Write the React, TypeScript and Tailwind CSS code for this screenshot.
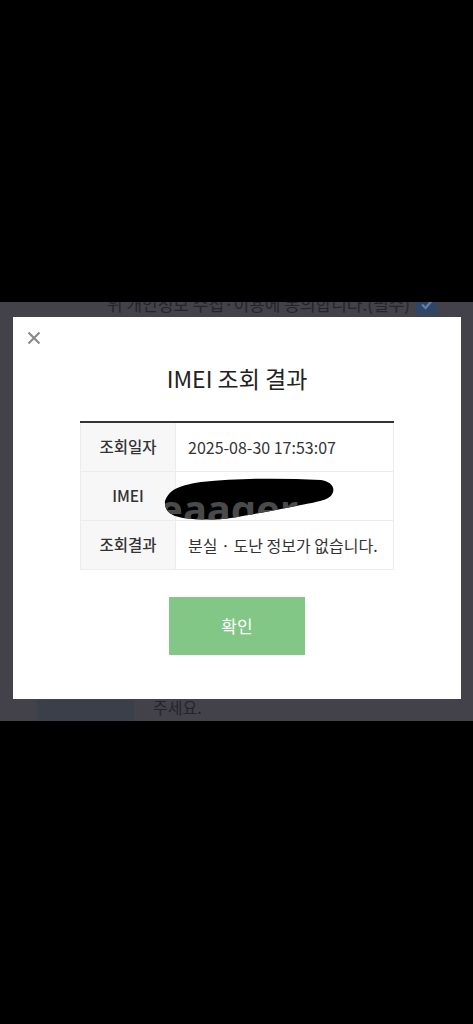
import React from 'react'

const FONT = { fontFamily: '"Noto Sans CJK KR", "Noto Sans", sans-serif' }

const ROWS = [
  { label: '조회일자', value: '2025-08-30 17:53:07' },
  { label: 'IMEI', value: '', redacted: true },
  { label: '조회결과', value: '분실 · 도난 정보가 없습니다.' },
]

const BLOB = 'M4 26 C8 16 14 11 40 7 C80 3 120 3 160 5 C168 6 174 11 172 17 C170 24 162 26 140 30 C120 34 100 38 70 43 C55 45 40 45 22 43 C10 41 3 36 4 26 Z'

function Scribble() {
  // black marker blob hiding the IMEI number
  return (
    <svg width="176" height="48" viewBox="0 0 176 48" className="absolute left-[-15px] top-[3px]">
      <defs>
        <clipPath id="blob">
          <path d={BLOB} />
        </clipPath>
      </defs>
      <path d={BLOB} fill="#000" />
      <g clipPath="url(#blob)">
        <text x="-2" y="49" fontSize="40" fontWeight="700" fill="#4a4a4a" fontFamily="Noto Sans, sans-serif">eaager</text>
      </g>
    </svg>
  )
}

export default function App() {
  return (
    <div className="w-[473px] h-[1024px] bg-black flex flex-col" style={FONT}>
      <div className="h-[302px] shrink-0" />

      <div className="relative h-[419px] shrink-0 bg-[#434149] overflow-hidden">
        {/* page behind the overlay */}
        <div className="flex items-center justify-end gap-[6px] pr-[36px] mt-[-11px] h-[26px] text-[17px] text-[#25242b]">
          <span>위 개인정보 수집·이용에 동의합니다.(필수)</span>
          <span className="w-[21px] h-[21px] rounded-[2px] bg-[#2e4565] flex items-center justify-center">
            <svg width="14" height="14" viewBox="0 0 14 14"><path d="M2 7.5 L5.5 11 L12 3.5" stroke="#5f7ea6" strokeWidth="2.4" fill="none" /></svg>
          </span>
        </div>
        <div className="absolute left-[37px] top-[398px] flex items-start gap-[19px]">
          <div className="w-[97px] h-[30px] bg-[#3a3f49]" />
          <span className="text-[16px] text-[#25242b] mt-[-5px]">주세요.</span>
        </div>

        {/* modal */}
        <div className="absolute left-[13px] top-[15px] w-[448px] h-[382px] bg-white">
          <button className="absolute left-[13px] top-[13px] w-[16px] h-[16px] flex items-center justify-center">
            <svg width="14" height="14" viewBox="0 0 14 14"><path d="M1.5 1.5 L12.5 12.5 M12.5 1.5 L1.5 12.5" stroke="#8a8a8a" strokeWidth="2.2" /></svg>
          </button>

          <h2 className="pt-[46px] text-center text-[23px] leading-[30px] text-[#222]">IMEI 조회 결과</h2>

          <div className="mx-[67px] mt-[28px] border-t-2 border-[#333]">
            {ROWS.map(r => (
              <div key={r.label} className="flex h-[49px] border-b border-x border-[#ececec]">
                <div className="w-[94px] shrink-0 bg-[#f7f7f7] flex items-center justify-center text-[15.5px] font-medium text-[#333]">
                  {r.label}
                </div>
                <div className="relative flex-1 flex items-center pl-[12px] text-[16px] text-[#333] border-l border-[#ececec]">
                  {r.redacted ? <Scribble /> : r.value}
                </div>
              </div>
            ))}
          </div>

          <div className="flex justify-center mt-[27px]">
            <button className="w-[136px] h-[58px] bg-[#82c785] text-white text-[17px]">확인</button>
          </div>
        </div>
      </div>

      <div className="flex-1" />
    </div>
  )
}
